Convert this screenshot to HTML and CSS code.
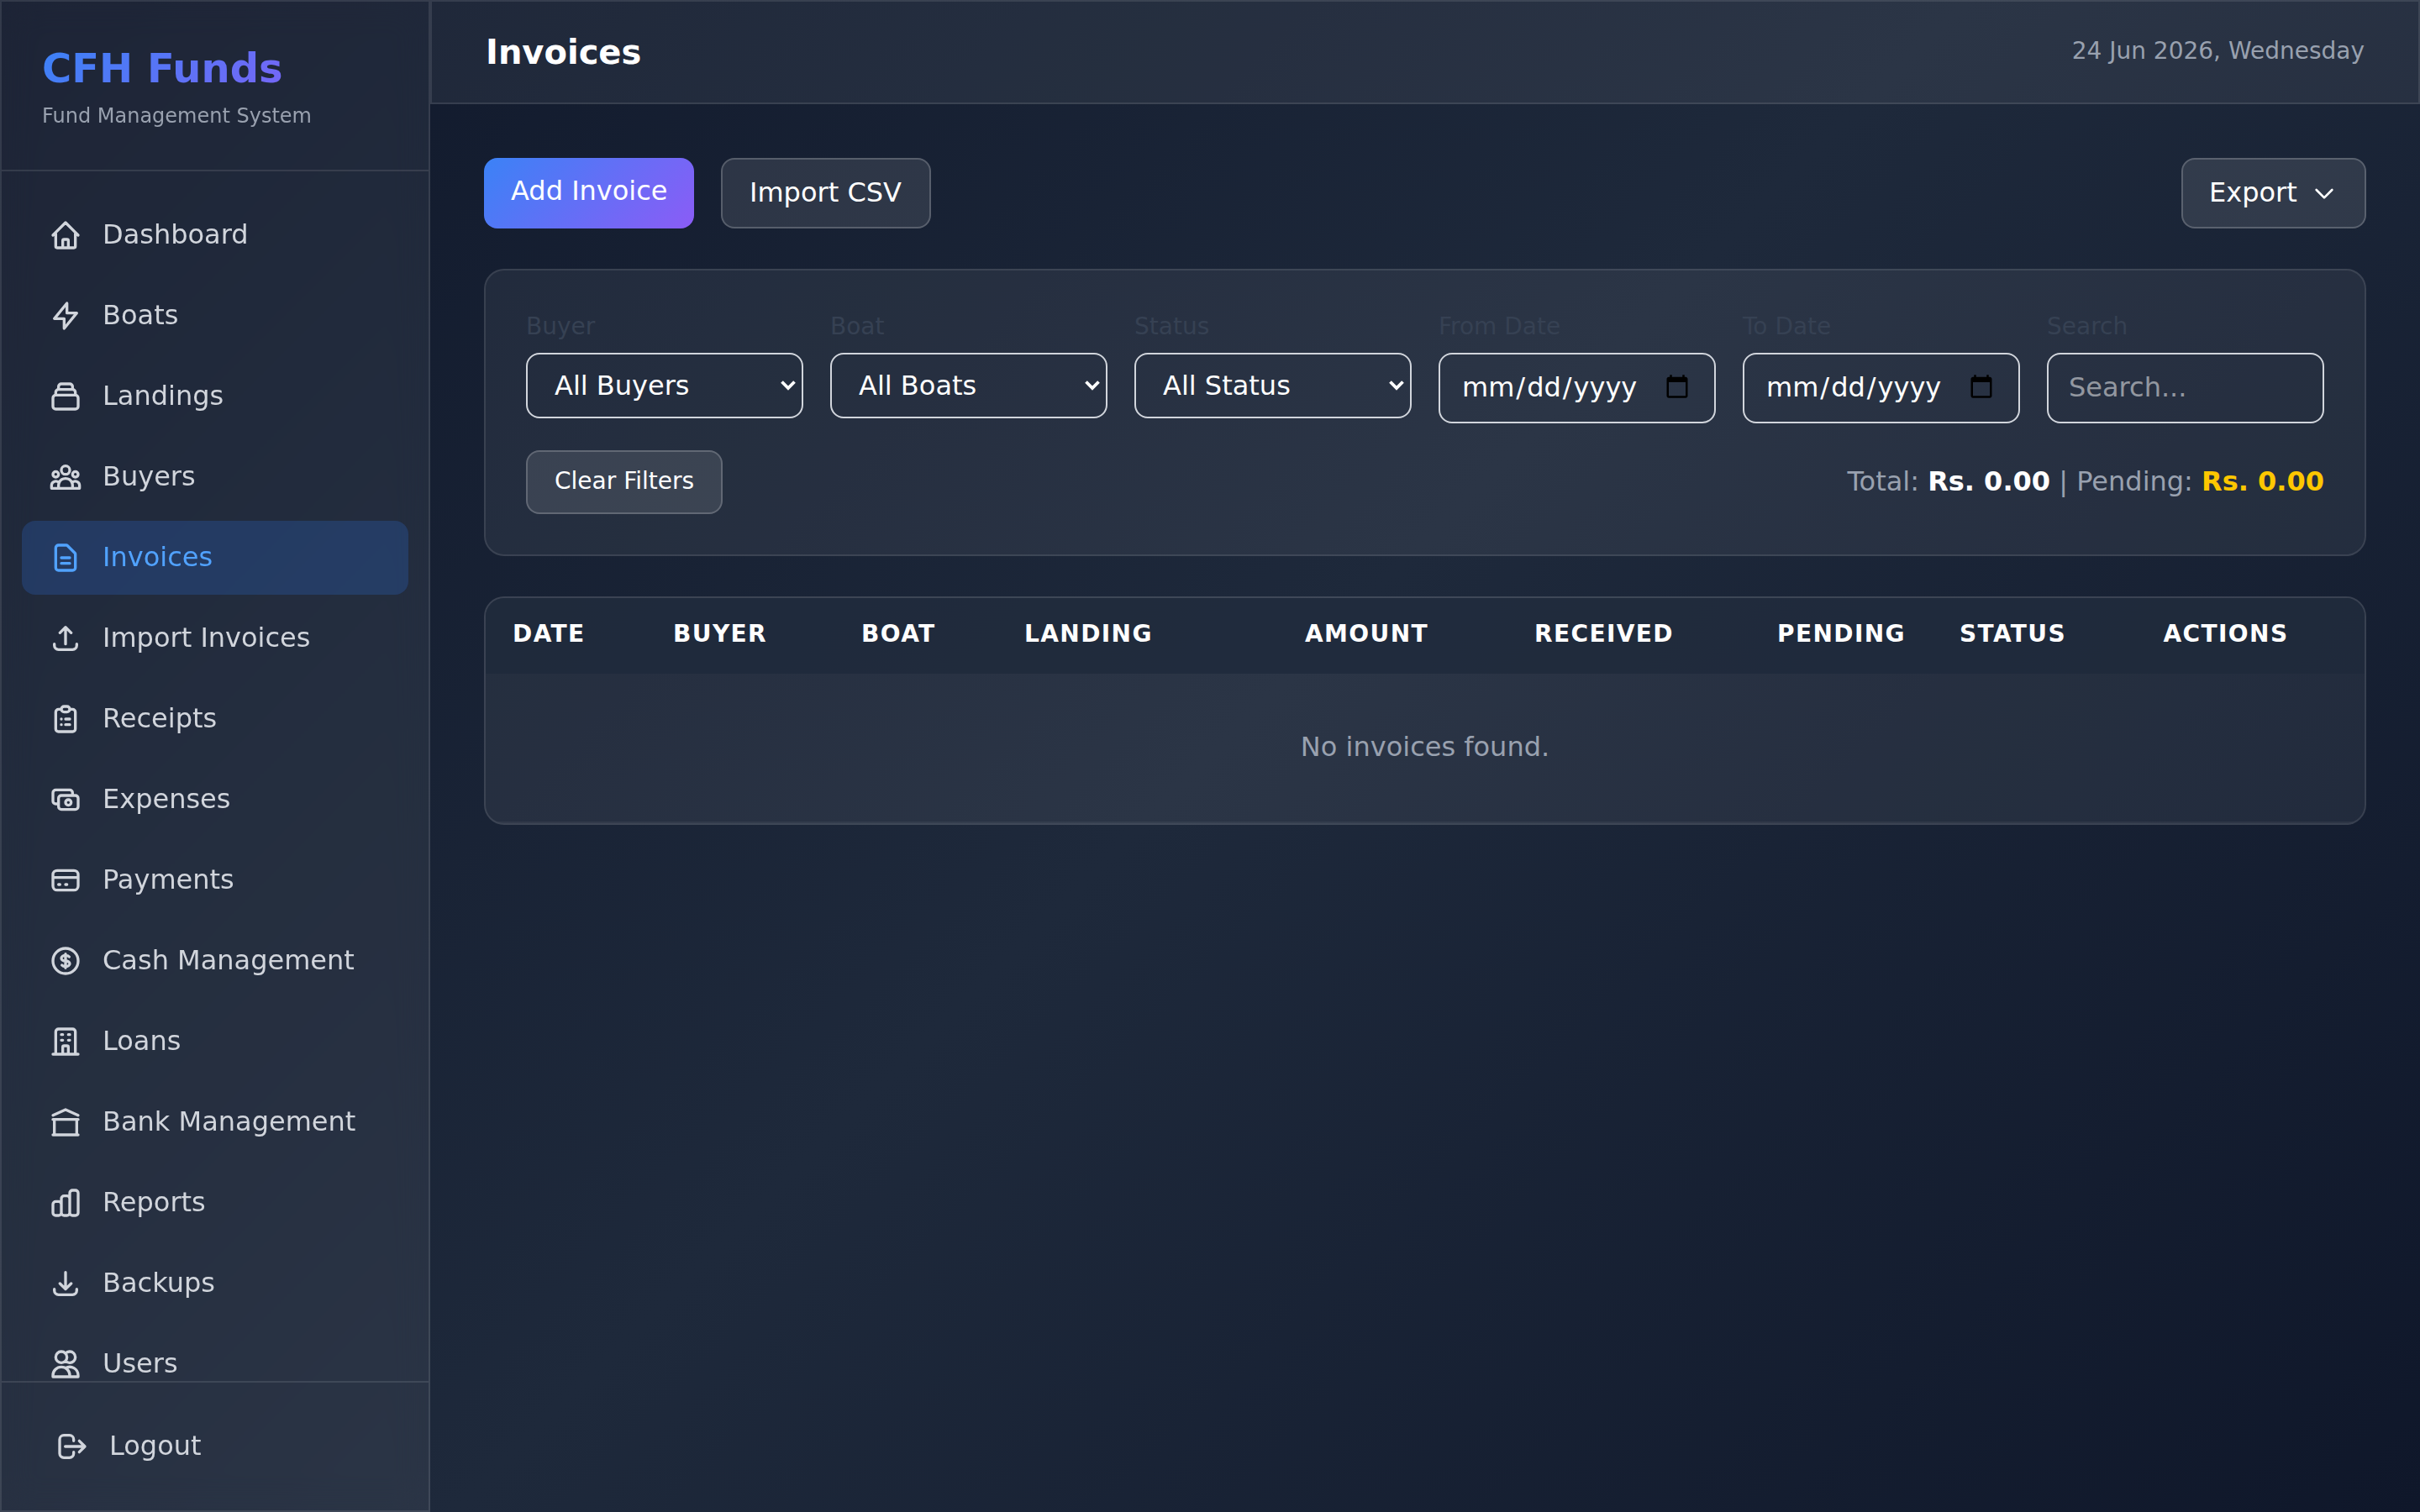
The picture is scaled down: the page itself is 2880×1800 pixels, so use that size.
FILE: index.html
```html
<!DOCTYPE html>
<html lang="en">
<head>
    <meta charset="UTF-8">
    <meta name="viewport" content="width=device-width, initial-scale=1.0">
    <title>Invoices - CFH Funds</title>
    <link rel="stylesheet" href="styles.css">
</head>
<body>
    <div class="layout">
        <aside class="sidebar glass">
            <div class="brand">
                <h1 class="brand-title">CFH Funds</h1>
                <p class="brand-subtitle">Fund Management System</p>
            </div>
            <nav class="nav">
                <a class="nav-link" href="#">
                    <svg class="icon" viewBox="0 0 24 24"><path d="M3 12l2-2m0 0l7-7 7 7M5 10v10a1 1 0 001 1h3m10-11l2 2m-2-2v10a1 1 0 01-1 1h-3m-6 0a1 1 0 001-1v-4a1 1 0 011-1h2a1 1 0 011 1v4a1 1 0 001 1m-6 0h6"/></svg>
                    Dashboard
                </a>
                <a class="nav-link" href="#">
                    <svg class="icon" viewBox="0 0 24 24"><path d="M13 10V3L4 14h7v7l9-11h-7z"/></svg>
                    Boats
                </a>
                <a class="nav-link" href="#">
                    <svg class="icon" viewBox="0 0 24 24"><path d="M19 11H5m14 0a2 2 0 012 2v6a2 2 0 01-2 2H5a2 2 0 01-2-2v-6a2 2 0 012-2m14 0V9a2 2 0 00-2-2M5 11V9a2 2 0 012-2m0 0V5a2 2 0 012-2h6a2 2 0 012 2v2M7 7h10"/></svg>
                    Landings
                </a>
                <a class="nav-link" href="#">
                    <svg class="icon" viewBox="0 0 24 24"><path d="M17 20h5v-2a3 3 0 00-5.356-1.857M17 20H7m10 0v-2c0-.656-.126-1.283-.356-1.857M7 20H2v-2a3 3 0 015.356-1.857M7 20v-2c0-.656.126-1.283.356-1.857m0 0a5.002 5.002 0 019.288 0M15 7a3 3 0 11-6 0 3 3 0 016 0zm6 3a2 2 0 11-4 0 2 2 0 014 0zM7 10a2 2 0 11-4 0 2 2 0 014 0z"/></svg>
                    Buyers
                </a>
                <a class="nav-link active" href="#">
                    <svg class="icon" viewBox="0 0 24 24"><path d="M9 12h6m-6 4h6m2 5H7a2 2 0 01-2-2V5a2 2 0 012-2h5.586a1 1 0 01.707.293l5.414 5.414a1 1 0 01.293.707V19a2 2 0 01-2 2z"/></svg>
                    Invoices
                </a>
                <a class="nav-link" href="#">
                    <svg class="icon" viewBox="0 0 24 24"><path d="M4 16v1a3 3 0 003 3h10a3 3 0 003-3v-1m-4-8l-4-4m0 0L8 8m4-4v12"/></svg>
                    Import Invoices
                </a>
                <a class="nav-link" href="#">
                    <svg class="icon" viewBox="0 0 24 24"><path d="M9 5H7a2 2 0 00-2 2v12a2 2 0 002 2h10a2 2 0 002-2V7a2 2 0 00-2-2h-2M9 5a2 2 0 002 2h2a2 2 0 002-2M9 5a2 2 0 012-2h2a2 2 0 012 2m-3 7h3m-3 4h3m-6-4h.01M9 16h.01"/></svg>
                    Receipts
                </a>
                <a class="nav-link" href="#">
                    <svg class="icon" viewBox="0 0 24 24"><path d="M17 9V7a2 2 0 00-2-2H5a2 2 0 00-2 2v6a2 2 0 002 2h2m2 4h10a2 2 0 002-2v-6a2 2 0 00-2-2H9a2 2 0 00-2 2v6a2 2 0 002 2zm7-5a2 2 0 11-4 0 2 2 0 014 0z"/></svg>
                    Expenses
                </a>
                <a class="nav-link" href="#">
                    <svg class="icon" viewBox="0 0 24 24"><path d="M3 10h18M7 15h1m4 0h1m-7 4h12a3 3 0 003-3V8a3 3 0 00-3-3H6a3 3 0 00-3 3v8a3 3 0 003 3z"/></svg>
                    Payments
                </a>
                <a class="nav-link" href="#">
                    <svg class="icon" viewBox="0 0 24 24"><path d="M12 8c-1.657 0-3 .895-3 2s1.343 2 3 2 3 .895 3 2-1.343 2-3 2m0-8c1.11 0 2.08.402 2.599 1M12 8V7m0 1v8m0 0v1m0-1c-1.11 0-2.08-.402-2.599-1M21 12a9 9 0 11-18 0 9 9 0 0118 0z"/></svg>
                    Cash Management
                </a>
                <a class="nav-link" href="#">
                    <svg class="icon" viewBox="0 0 24 24"><path d="M19 21V5a2 2 0 00-2-2H7a2 2 0 00-2 2v16m14 0h2m-2 0h-5m-9 0H3m2 0h5M9 7h1m-1 4h1m4-4h1m-1 4h1m-5 10v-5a1 1 0 011-1h2a1 1 0 011 1v5m-4 0h4"/></svg>
                    Loans
                </a>
                <a class="nav-link" href="#">
                    <svg class="icon" viewBox="0 0 24 24"><path d="M3 21h18M3 10h18M3 7l9-4 9 4M4 10h16v11H4V10z"/></svg>
                    Bank Management
                </a>
                <a class="nav-link" href="#">
                    <svg class="icon" viewBox="0 0 24 24"><path d="M9 19v-6a2 2 0 00-2-2H5a2 2 0 00-2 2v6a2 2 0 002 2h2a2 2 0 002-2zm0 0V9a2 2 0 012-2h2a2 2 0 012 2v10m-6 0a2 2 0 002 2h2a2 2 0 002-2m0 0V5a2 2 0 012-2h2a2 2 0 012 2v14a2 2 0 01-2 2h-2a2 2 0 01-2-2z"/></svg>
                    Reports
                </a>
                <a class="nav-link" href="#">
                    <svg class="icon" viewBox="0 0 24 24"><path d="M4 16v1a3 3 0 003 3h10a3 3 0 003-3v-1m-4-4l-4 4m0 0l-4-4m4 4V4"/></svg>
                    Backups
                </a>
                <a class="nav-link" href="#">
                    <svg class="icon" viewBox="0 0 24 24"><path d="M12 4.354a4 4 0 110 5.292M15 21H3v-1a6 6 0 0112 0v1zm0 0h6v-1a6 6 0 00-9-5.197M13 7a4 4 0 11-8 0 4 4 0 018 0z"/></svg>
                    Users
                </a>
            </nav>
            <div class="sidebar-footer">
                <a class="nav-link" href="#">
                    <svg class="icon" viewBox="0 0 24 24"><path d="M17 16l4-4m0 0l-4-4m4 4H7m6 4v1a3 3 0 01-3 3H6a3 3 0 01-3-3V7a3 3 0 013-3h4a3 3 0 013 3v1"/></svg>
                    Logout
                </a>
            </div>
        </aside>

        <div class="main">
            <header class="topbar glass">
                <h2 class="page-title">Invoices</h2>
                <span class="today">24 Jun 2026, Wednesday</span>
            </header>

            <main class="content">
                <div class="toolbar">
                    <div class="toolbar-group">
                        <a class="btn btn-primary" href="#">Add Invoice</a>
                        <a class="btn btn-glass btn-import" href="#">Import CSV</a>
                    </div>
                    <button class="btn btn-glass btn-export" type="button">
                        Export
                        <svg class="icon icon-small" viewBox="0 0 24 24"><path d="M19 9l-7 7-7-7"/></svg>
                    </button>
                </div>

                <form class="card glass filters">
                    <div class="filter-grid">
                        <div class="field">
                            <label for="buyer">Buyer</label>
                            <div class="select-wrap">
                                <select id="buyer" class="control"><option>All Buyers</option></select>
                                <svg class="arrow" viewBox="0 0 20 14"><path d="M2.5 2.5L10 10l7.5-7.5"/></svg>
                            </div>
                        </div>
                        <div class="field">
                            <label for="boat">Boat</label>
                            <div class="select-wrap">
                                <select id="boat" class="control"><option>All Boats</option></select>
                                <svg class="arrow" viewBox="0 0 20 14"><path d="M2.5 2.5L10 10l7.5-7.5"/></svg>
                            </div>
                        </div>
                        <div class="field">
                            <label for="status">Status</label>
                            <div class="select-wrap">
                                <select id="status" class="control"><option>All Status</option></select>
                                <svg class="arrow" viewBox="0 0 20 14"><path d="M2.5 2.5L10 10l7.5-7.5"/></svg>
                            </div>
                        </div>
                        <div class="field">
                            <label for="from">From Date</label>
                            <input id="from" class="control" type="date">
                        </div>
                        <div class="field">
                            <label for="to">To Date</label>
                            <input id="to" class="control" type="date">
                        </div>
                        <div class="field">
                            <label for="search">Search</label>
                            <input id="search" class="control" type="text" placeholder="Search...">
                        </div>
                    </div>
                    <div class="filter-footer">
                        <button class="btn btn-glass btn-small" type="reset">Clear Filters</button>
                        <p class="totals">Total: <strong class="total">Rs. 0.00</strong> | Pending: <strong class="pending">Rs. 0.00</strong></p>
                    </div>
                </form>

                <div class="card glass table-card">
                    <table class="table">
                        <colgroup>
                            <col class="col-date">
                            <col class="col-buyer">
                            <col class="col-boat">
                            <col class="col-landing">
                            <col class="col-amount">
                            <col class="col-received">
                            <col class="col-pending">
                            <col class="col-status">
                            <col class="col-actions">
                        </colgroup>
                        <thead>
                            <tr>
                                <th>Date</th>
                                <th>Buyer</th>
                                <th>Boat</th>
                                <th>Landing</th>
                                <th class="right">Amount</th>
                                <th class="right">Received</th>
                                <th class="right">Pending</th>
                                <th>Status</th>
                                <th class="center">Actions</th>
                            </tr>
                        </thead>
                        <tbody>
                            <tr>
                                <td class="empty" colspan="9">No invoices found.</td>
                            </tr>
                        </tbody>
                    </table>
                </div>
            </main>
        </div>
    </div>
</body>
</html>
```
FILE: styles.css
```css
* {
    box-sizing: border-box;
    margin: 0;
    padding: 0;
}

body {
    font-family: "DejaVu Sans", sans-serif;
    font-size: 32px;
    line-height: 46px;
    color: #fff;
    height: 100vh;
    overflow: hidden;
    background: linear-gradient(135deg, #0f172a 0%, #1e293b 50%, #0f172a 100%);
}

a {
    color: inherit;
    text-decoration: none;
}

.glass {
    background: rgba(255, 255, 255, 0.06);
    border: 2px solid rgba(255, 255, 255, 0.1);
}

.icon {
    width: 40px;
    height: 40px;
    margin-top: 2px;
    flex-shrink: 0;
    fill: none;
    stroke: currentColor;
    stroke-width: 2;
    stroke-linecap: round;
    stroke-linejoin: round;
}

.icon-small {
    width: 32px;
    height: 32px;
}

.layout {
    display: flex;
    height: 100vh;
}

/* Sidebar */
.sidebar {
    display: flex;
    flex-direction: column;
    flex-shrink: 0;
    width: 512px;
    backdrop-filter: blur(20px);
}

.brand {
    padding: 48px;
    border-bottom: 2px solid rgba(255, 255, 255, 0.1);
}

.brand-title {
    font-size: 48px;
    line-height: 62px;
    background: linear-gradient(135deg, #3b82f6, #8b5cf6);
    background-clip: text;
    -webkit-background-clip: text;
    color: transparent;
}

.brand-subtitle {
    margin-top: 10px;
    font-size: 24px;
    line-height: 32px;
    color: #99a1af;
}

.nav {
    display: flex;
    flex-direction: column;
    flex: 1;
    gap: 8px;
    min-height: 0;
    padding: 32px 24px;
    overflow: hidden;
}

.nav-link {
    display: flex;
    align-items: center;
    flex-shrink: 0;
    gap: 24px;
    padding: 20px 32px 22px;
    border-radius: 16px;
    color: #d1d5dc;
}

.nav-link.active {
    background: rgba(43, 127, 255, 0.2);
    color: #51a2ff;
}

.sidebar-footer {
    padding: 32px;
    border-top: 2px solid rgba(255, 255, 255, 0.1);
}

/* Top bar */
.main {
    flex: 1;
    min-width: 0;
}

.topbar {
    display: flex;
    align-items: center;
    justify-content: space-between;
    height: 124px;
    padding: 0 64px;
}

.page-title {
    font-size: 40px;
    line-height: 56px;
}

.today {
    padding-bottom: 2px;
    font-size: 28px;
    line-height: 38px;
    color: #99a1af;
}

/* Content */
.content {
    display: flex;
    flex-direction: column;
    gap: 48px;
    padding: 64px;
}

.toolbar,
.toolbar-group {
    display: flex;
    justify-content: space-between;
    gap: 32px;
}

.btn {
    padding: 16px 32px 18px;
    border: none;
    border-radius: 16px;
    font: inherit;
    color: #fff;
    white-space: nowrap;
    cursor: pointer;
}

.btn-primary {
    width: 250px;
    background: linear-gradient(135deg, #3b82f6, #8b5cf6);
}

.btn-glass {
    background: rgba(255, 255, 255, 0.1);
    border: 2px solid rgba(255, 255, 255, 0.2);
}

.btn-import {
    width: 250px;
}

.btn-export {
    display: flex;
    align-items: center;
    justify-content: space-between;
    width: 220px;
    padding-left: 31px;
}

.btn-small {
    font-size: 28px;
    line-height: 38px;
}

.card {
    border-radius: 24px;
}

/* Filters */
.filters {
    padding: 48px;
}

.filter-grid {
    display: grid;
    grid-template-columns: repeat(6, minmax(0, 1fr));
    gap: 32px;
}

.field label {
    display: block;
    margin-bottom: 12px;
    font-size: 28px;
    line-height: 38px;
    color: #364153;
}

/* zoom also scales the native calendar button */
.control {
    zoom: 2;
    display: block;
    width: 100%;
    height: 42px;
    padding: 7.5px 12px 8.5px;
    border: 1px solid #d1d5dc;
    border-radius: 8px;
    background: transparent;
    font-family: inherit;
    font-size: 16px;
    line-height: 24px;
    color: #fff;
}

.select-wrap {
    position: relative;
}

select.control {
    appearance: none;
    height: 39px;
    padding: 0 16px;
}

.arrow {
    position: absolute;
    top: 32px;
    right: 8px;
    width: 20px;
    height: 14px;
    fill: none;
    stroke: #fff;
    stroke-width: 3.8;
    pointer-events: none;
}

.control::placeholder {
    color: rgba(255, 255, 255, 0.5);
}

.filter-footer {
    display: flex;
    align-items: center;
    justify-content: space-between;
    margin-top: 32px;
}

.totals {
    padding-bottom: 2px;
    color: #99a1af;
}

.total {
    color: #fff;
}

.pending {
    color: #fdc700;
}

/* Table */
.table-card {
    overflow: hidden;
}

.table {
    width: 100%;
    table-layout: fixed;
    border-collapse: separate;
    border-spacing: 0;
}

.col-date { width: 191px; }
.col-buyer { width: 224px; }
.col-boat { width: 194px; }
.col-landing { width: 299px; }
.col-amount { width: 246px; }
.col-received { width: 292px; }
.col-pending { width: 276px; }
.col-status { width: 184px; }
.col-actions { width: 330px; }

.table th {
    padding: 24px 32px 28px;
    background: rgba(30, 41, 59, 0.8);
    font-size: 28px;
    line-height: 38px;
    letter-spacing: 0.05em;
    text-align: left;
    text-transform: uppercase;
    white-space: nowrap;
}

.table .right {
    text-align: right;
}

.table .center {
    text-align: center;
}

.table .empty {
    padding: 64px 32px 66px;
    border-bottom: 2px solid rgba(255, 255, 255, 0.05);
    text-align: center;
    color: #99a1af;
}
```
